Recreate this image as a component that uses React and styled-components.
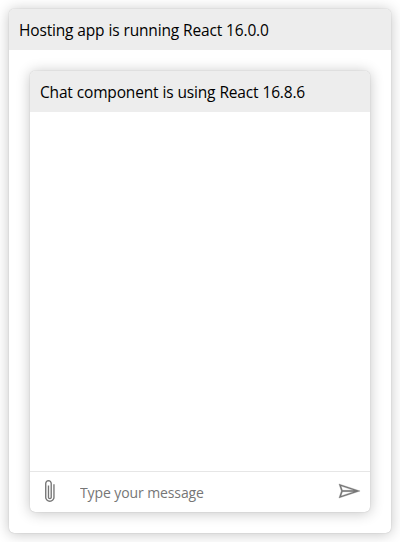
import React from "react";
import styled, { createGlobalStyle } from "styled-components";

const GlobalStyle = createGlobalStyle`
  body { margin: 0; background: #fff; }
  * { box-sizing: border-box; }
`;

const Card = styled.section`
  display: flex;
  flex-direction: column;
  height: ${(p) => p.$height}px;
  margin: ${(p) => p.$margin};
  background: #fff;
  border-radius: 5px;
  overflow: hidden;
  box-shadow: 0 0 1px rgba(0, 0, 0, 0.3), 0 1px 14px rgba(0, 0, 0, 0.24);
`;

const Heading = styled.h1`
  flex: none;
  height: 41px;
  margin: 0;
  padding: 0 10px;
  background: #ededed;
  color: #000;
  font: 400 15.5px/43px "Open Sans", "Noto Sans", sans-serif;
  letter-spacing: -0.17px;
  word-spacing: 0.2px;
  white-space: nowrap;
`;

const Transcript = styled.div`
  flex: 1;
`;

const SendBox = styled.form`
  display: flex;
  flex: none;
  height: 41px;
  border-top: 1px solid #e6e6e6;
`;

const IconButton = styled.button`
  display: flex;
  align-items: center;
  justify-content: center;
  width: 40px;
  height: ${(p) => p.$height}px;
  padding: 0;
  border: 0;
  background: transparent;
  svg {
    height: ${(p) => p.$iconHeight}px;
    fill: #767676;
  }
`;

const MessageInput = styled.input`
  flex: 1;
  min-width: 0;
  padding: 1px 10px 0;
  border: 0;
  outline: 0;
  background: transparent;
  font: 400 14px "Open Sans", sans-serif;
  letter-spacing: -0.1px;
  &::placeholder {
    color: #767676;
    opacity: 1;
  }
`;

const AttachmentIcon = () => (
  <svg viewBox="0 0 25.75 46">
    <path d="M20.75 11.75v21.37a7.69 7.69 0 0 1-.62 3.07 7.95 7.95 0 0 1-4.19 4.19 7.89 7.89 0 0 1-6.13 0 7.95 7.95 0 0 1-4.19-4.19 7.69 7.69 0 0 1-.62-3.07v-22.5a5.47 5.47 0 0 1 .45-2.19 5.7 5.7 0 0 1 3-3 5.63 5.63 0 0 1 4.37 0 5.7 5.7 0 0 1 3 3 5.47 5.47 0 0 1 .45 2.19v22.5a3.41 3.41 0 0 1-.26 1.32 3.31 3.31 0 0 1-1.8 1.8 3.46 3.46 0 0 1-2.63 0 3.31 3.31 0 0 1-1.8-1.8 3.41 3.41 0 0 1-.26-1.32V14h2.25v19.12a1.13 1.13 0 1 0 2.25 0v-22.5a3.41 3.41 0 0 0-.26-1.32 3.31 3.31 0 0 0-1.8-1.8 3.46 3.46 0 0 0-2.63 0 3.31 3.31 0 0 0-1.8 1.8 3.41 3.41 0 0 0-.26 1.32v22.5a5.32 5.32 0 0 0 .45 2.18 5.69 5.69 0 0 0 1.2 1.8 5.86 5.86 0 0 0 1.8 1.21 5.5 5.5 0 0 0 4.37 0 5.86 5.86 0 0 0 1.8-1.21 5.69 5.69 0 0 0 1.2-1.8 5.32 5.32 0 0 0 .45-2.18V11.75z" />
  </svg>
);

const SendIcon = () => (
  <svg viewBox="0 0 45.7 33.8">
    <path
      clipRule="evenodd"
      fillRule="evenodd"
      stroke="#767676"
      strokeWidth="0.5"
      d="M8.55 25.25l21.67-7.25H11zm2.41-9.47h19.26l-21.67-7.23zm-6 13l4-11.9L5 5l35.7 11.9z"
    />
  </svg>
);

export default function App() {
  return (
    <>
      <GlobalStyle />
      <Card as="main" $height={524} $margin="9px">
        <Heading>Hosting app is running React 16.0.0</Heading>
        <Card $height={441} $margin="21px 21px 0">
          <Heading as="h2">Chat component is using React 16.8.6</Heading>
          <Transcript />
          <SendBox>
            <IconButton type="button" aria-label="Attach file" $height={38} $iconHeight={28}>
              <AttachmentIcon />
            </IconButton>
            <MessageInput placeholder="Type your message" />
            <IconButton type="button" aria-label="Send" $height={38} $iconHeight={20}>
              <SendIcon />
            </IconButton>
          </SendBox>
        </Card>
      </Card>
    </>
  );
}
